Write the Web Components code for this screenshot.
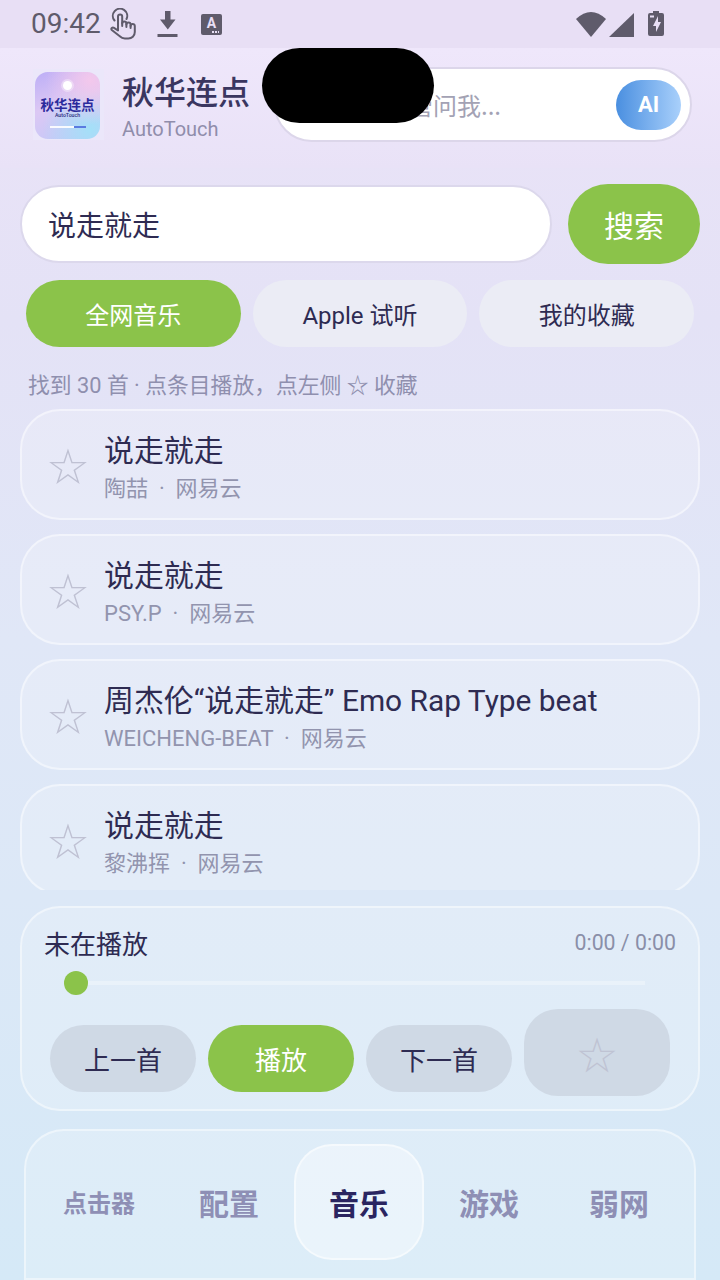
<!DOCTYPE html>
<html lang="zh">
<head>
<meta charset="utf-8">
<title>AutoTouch</title>
<style>
    html, body { margin: 0; padding: 0; }
    body {
        width: 720px;
        height: 1280px;
        overflow: hidden;
        font-family: Roboto, "Noto Sans CJK SC", sans-serif;
        color: #2e2b52;
        background: linear-gradient(180deg, #ece3f8 0%, #e4e2f6 25%, #e0e7f7 50%, #dce8f7 70%, #d5e9f7 100%);
    }
</style>
</head>
<body>
<app-shell>
    <status-bar></status-bar>
    <app-header></app-header>
    <search-bar value="说走就走"></search-bar>
    <source-tabs></source-tabs>
    <result-hint>找到 30 首 · 点条目播放，点左侧 ☆ 收藏</result-hint>
    <song-list>
        <song-row title-text="说走就走" sub="陶喆 &nbsp;·&nbsp; 网易云"></song-row>
        <song-row title-text="说走就走" sub="PSY.P &nbsp;·&nbsp; 网易云"></song-row>
        <song-row title-text="周杰伦“说走就走” Emo Rap Type beat" sub="WEICHENG-BEAT &nbsp;·&nbsp; 网易云"></song-row>
        <song-row title-text="说走就走" sub="黎沸挥 &nbsp;·&nbsp; 网易云"></song-row>
    </song-list>
    <player-card></player-card>
    <bottom-nav></bottom-nav>
</app-shell>

<script>
class AppShell extends HTMLElement {
    constructor () {
        super();
        this.attachShadow({mode: 'open'})
        this.shadowRoot.innerHTML = `
            <style>
                :host { display: flex; flex-direction: column; width: 720px; height: 1280px; position: relative; overflow: hidden; }
                .cutout { position: absolute; left: 262px; top: 48px; width: 172px; height: 75px; border-radius: 38px; background: #000; }
            </style>
            <slot></slot>
            <div class="cutout"></div>
        `
    }
}

class StatusBar extends HTMLElement {
    constructor () {
        super();
        this.attachShadow({mode: 'open'})
        this.shadowRoot.innerHTML = `
            <style>
                :host { display: flex; align-items: center; height: 48px; padding-left: 31px; background: #e8dff5; color: #5f5b6b; box-sizing: border-box; }
                .time { font: 400 28px/48px Roboto, sans-serif; width: 79px; }
                svg { display: block; flex: none; }
                .dl { margin-left: 20px; }
                .kbd { margin-left: 22px; width: 21px; height: 21px; border-radius: 2px; background: #5f5b6b; color: #e8dff5; position: relative; flex: none; display: flex; justify-content: center; margin-top: 1px; }
                .kbd b { font: 700 14px/19px Roboto, sans-serif; }
                .kbd i { position: absolute; right: 3px; bottom: 2px; width: 7px; height: 2px; background: repeating-linear-gradient(90deg, #e8dff5 0 2px, transparent 2px 3px); }
                .right { margin-left: auto; margin-right: 56px; display: flex; }
            </style>
            <div class="time">09:42</div>
            <svg class="hand" width="27" height="32" viewBox="0 0 27 32" fill="none" stroke="currentColor" stroke-width="2" stroke-linecap="round" stroke-linejoin="round">
                <path d="M4.5 12.5 A7.2 7.2 0 1 1 16.5 11"/>
                <path d="M8 22 V8.5 a2.1 2.1 0 0 1 4.2 0 V18"/>
                <path d="M12.2 15.5 a2.1 2.1 0 0 1 4.2 0 V19"/>
                <path d="M16.4 16.5 a2.1 2.1 0 0 1 4.2 0 V20"/>
                <path d="M20.6 18 a2.1 2.1 0 0 1 4.2 0 V24 c0 4 -3 6.5 -6.5 6.5 h-3.5 c-2.2 0 -3.6 -.8 -5 -2.2 L1.8 22 c-1.2 -1.4 .6 -3.2 2.2 -2.2 L8 22.5"/>
            </svg>
            <svg class="dl" width="22" height="27" viewBox="0 0 22 27" fill="currentColor">
                <path d="M8 0h5.5v8.5h5L10.800 18.500 3 8.500h5z"/>
                <rect x="0.500" y="23" width="20" height="3"/>
            </svg>
            <div class="kbd"><b>A</b><i></i></div>
            <svg class="right" width="88" height="26" viewBox="576 10 88 26" fill="currentColor">
                <path d="M576 18 Q591 4 606 18 L591 36 Z"/>
                <path d="M609 36 L634 12 V36 Z"/>
                <path d="M653 10h6v2h3a2 2 0 0 1 2 2v19a2 2 0 0 1 -2 2h-12a2 2 0 0 1 -2 -2v-19a2 2 0 0 1 2 -2h3z"/>
                <path fill="#e8dff5" d="M658 15l-5 10h3v6l5-10h-3z M650 14.500h4v2h-4z"/>
            </svg>
        `
    }
}

class AppHeader extends HTMLElement {
    constructor () {
        super();
        this.attachShadow({mode: 'open'})
        this.shadowRoot.innerHTML = `
            <style>
                :host { display: flex; align-items: flex-start; height: 120px; padding: 19px 28px 0 33px; box-sizing: border-box; background: linear-gradient(180deg, #efe7fb, #e9e2f7); font-family: Roboto, "Noto Sans CJK SC", sans-serif; }
                .tile { width: 71px; height: 71px; margin-top: 2px; padding: 3px 0 0 2px; box-sizing: border-box; flex: none; background: #ebe7fa; }
                .logo { width: 65px; height: 67px; border-radius: 13px; background: radial-gradient(circle at 85% 12%, #f3c8ec 0, rgba(243,200,236,0) 55%), radial-gradient(circle at 85% 85%, #a4e0f8 0, rgba(164,224,248,0) 60%), linear-gradient(160deg, #bcaef6 0%, #dcc8f4 45%, #c0c8f8 100%); display: flex; flex-direction: column; align-items: center; overflow: hidden; }
                .dot { width: 9px; height: 9px; margin-top: 9px; border-radius: 50%; background: #fff; box-shadow: 0 0 0 2px rgba(255,255,255,.35); flex: none; }
                .logo b { font: 700 13.500px/16px "Noto Sans CJK SC", sans-serif; color: #2b2a9c; margin-top: 6px; white-space: nowrap; flex: none; }
                .logo small { font: 500 5.200px/6px Roboto, sans-serif; color: #2b2a7c; flex: none; }
                .bar { width: 36px; height: 2px; margin-top: 8px; flex: none; background: linear-gradient(90deg, rgba(255,255,255,.9) 68%, #5a7be0 68%); }
                .names { margin-left: 18px; width: 128px; flex: none; }
                .name { font: 500 32px/46px "Noto Sans CJK SC", sans-serif; color: #3a3660; white-space: nowrap; }
                .en { font: 400 20px/26px Roboto, sans-serif; color: #908dab; margin-top: 3px; }
                .ask { margin-left: 24px; flex: 1; height: 75px; box-sizing: border-box; border: 2px solid #dcd6ea; border-radius: 38px; background: #fff; display: flex; align-items: center; justify-content: space-between; padding: 0 9px 0 109px; }
                .ask span { font: 400 24px/32px "Noto Sans CJK SC", sans-serif; color: #a3a2b4; }
                .ai { width: 65px; height: 50px; border-radius: 25px; background: linear-gradient(90deg, #4a8fe0, #a9d0fb); color: #fff; font: 700 22px/50px Roboto, sans-serif; text-align: center; }
            </style>
            <div class="tile"><div class="logo"><div class="dot"></div><b>秋华连点</b><small>AutoTouch</small><div class="bar"></div></div></div>
            <div class="names"><div class="name">秋华连点</div><div class="en">AutoTouch</div></div>
            <div class="ask"><span>尽管问我...</span><div class="ai">AI</div></div>
        `
    }
}

class SearchBar extends HTMLElement {
    constructor () {
        super();
        this.attachShadow({mode: 'open'})
        this.shadowRoot.innerHTML = `
            <style>
                :host { display: flex; gap: 16px; padding: 16px 20px 0; align-items: center; }
                .input { flex: 1; height: 78px; box-sizing: border-box; border: 2px solid #dcd8ec; border-radius: 39px; background: #fff; padding-left: 26px; font: 400 28px/74px "Noto Sans CJK SC", sans-serif; color: #2e2b52; }
                .go { width: 132px; height: 80px; border-radius: 40px; background: #8bc34a; color: #fff; font: 400 30px/80px "Noto Sans CJK SC", sans-serif; text-align: center; flex: none; }
            </style>
            <div class="input">${this.getAttribute("value")}</div>
            <div class="go">搜索</div>
        `
    }
}

class SourceTabs extends HTMLElement {
    constructor () {
        super();
        this.attachShadow({mode: 'open'})
        this.shadowRoot.innerHTML = `
            <style>
                :host { display: grid; grid-template-columns: repeat(3, 1fr); gap: 12px; padding: 16px 26px 0; }
                div { height: 67px; border-radius: 34px; background: #ebecf5; color: #2e2b52; font: 400 24px/72px Roboto, "Noto Sans CJK SC", sans-serif; text-align: center; white-space: nowrap; }
                .on { background: #8bc34a; color: #fff; }
            </style>
            <div class="on">全网音乐</div><div>Apple 试听</div><div>我的收藏</div>
        `
    }
}

class ResultHint extends HTMLElement {
    constructor () {
        super();
        this.attachShadow({mode: 'open'})
        this.shadowRoot.innerHTML = `
            <style>
                :host { display: block; height: 62px; padding: 24px 0 0 28px; box-sizing: border-box; font: 400 21.800px/30px Roboto, "Noto Sans CJK SC", sans-serif; color: #8f8fae; white-space: nowrap; }
            </style>
            <slot></slot>
        `
    }
}

class SongList extends HTMLElement {
    constructor () {
        super();
        this.attachShadow({mode: 'open'})
        this.shadowRoot.innerHTML = `
            <style>
                :host { display: flex; flex-direction: column; gap: 14px; height: 481px; overflow: hidden; padding: 0 20px; flex: none; }
            </style>
            <slot></slot>
        `
    }
}

class SongRow extends HTMLElement {
    constructor () {
        super();
        this.attachShadow({mode: 'open'})
        this.shadowRoot.innerHTML = `
            <style>
                :host { display: flex; align-items: center; flex: none; height: 111px; box-sizing: border-box; border: 2px solid rgba(255,255,255,.45); border-radius: 40px; background: rgba(255,255,255,.2); padding-left: 24px; }
                .star { width: 38px; flex: none; margin-top: 7px; font: 400 49px/50px "DejaVu Sans", sans-serif; color: #bfc1d3; text-align: center; }
                .text { margin-left: 20px; min-width: 0; margin-top: 7px; }
                .t { font: 400 29.900px/38px Roboto, "Noto Sans CJK SC", sans-serif; color: #2e2b52; white-space: nowrap; }
                .s { font: 400 22px/30px Roboto, "Noto Sans CJK SC", sans-serif; color: #9294ae; white-space: nowrap; margin-top: 4px; }
            </style>
            <div class="star">☆</div>
            <div class="text">
                <div class="t">${this.getAttribute("title-text")}</div>
                <div class="s">${this.getAttribute("sub")}</div>
            </div>
        `
    }
}

class PlayerCard extends HTMLElement {
    constructor () {
        super();
        this.attachShadow({mode: 'open'})
        this.shadowRoot.innerHTML = `
            <style>
                :host { display: block; flex: none; height: 205px; margin: 16px 20px 0; box-sizing: border-box; border: 2px solid rgba(255,255,255,.45); border-radius: 40px; background: rgba(255,255,255,.18); padding: 15px 22px 0; }
                .top { display: flex; justify-content: space-between; align-items: center; height: 40px; }
                .now { font: 400 26px/40px "Noto Sans CJK SC", sans-serif; color: #2e2b52; }
                .time { font: 400 21.300px/40px Roboto, sans-serif; color: #8a8fa8; }
                .slider { height: 24px; margin: 8px 31px 0 20px; display: flex; align-items: center; }
                .thumb { width: 24px; height: 24px; border-radius: 50%; background: #8bc34a; flex: none; }
                .track { flex: 1; height: 4px; background: rgba(255,255,255,.3); }
                .btns { display: flex; gap: 12px; align-items: flex-start; margin: 14px 0 0 6px; }
                .btn { width: 146px; height: 67px; margin-top: 16px; border-radius: 34px; background: #cfd9e5; font: 400 26px/68px "Noto Sans CJK SC", sans-serif; color: #2e2b52; text-align: center; flex: none; }
                .play { background: #8bc34a; color: #fff; }
                .fav { height: 87px; margin-top: 0; border-radius: 34px; font: 400 48px/92px "DejaVu Sans", sans-serif; color: #bfc3d3; }
            </style>
            <div class="top"><div class="now">未在播放</div><div class="time">0:00 / 0:00</div></div>
            <div class="slider"><div class="thumb"></div><div class="track"></div></div>
            <div class="btns">
                <div class="btn">上一首</div>
                <div class="btn play">播放</div>
                <div class="btn">下一首</div>
                <div class="btn fav">☆</div>
            </div>
        `
    }
}

class BottomNav extends HTMLElement {
    constructor () {
        super();
        this.attachShadow({mode: 'open'})
        this.shadowRoot.innerHTML = `
            <style>
                :host { display: grid; grid-template-columns: repeat(5, 130px); flex: none; height: 151px; margin: 18px 24px 0; box-sizing: border-box; border: 2px solid rgba(255,255,255,.45); border-radius: 40px 40px 0 0; background: rgba(255,255,255,.18); padding: 13px 8px 18px; }
                div { height: 116px; box-sizing: border-box; text-align: center; font: 700 30px/116px "Noto Sans CJK SC", sans-serif; color: #8e8fb5; }
                .small { font-size: 24px; }
                .on { color: #2a2560; background: rgba(255,255,255,.4); border: 2px solid rgba(255,255,255,.5); border-radius: 38px; line-height: 112px; }
            </style>
            <div class="small">点击器</div><div>配置</div><div class="on">音乐</div><div>游戏</div><div>弱网</div>
        `
    }
}

customElements.define('app-shell', AppShell)
customElements.define('status-bar', StatusBar)
customElements.define('app-header', AppHeader)
customElements.define('search-bar', SearchBar)
customElements.define('source-tabs', SourceTabs)
customElements.define('result-hint', ResultHint)
customElements.define('song-list', SongList)
customElements.define('song-row', SongRow)
customElements.define('player-card', PlayerCard)
customElements.define('bottom-nav', BottomNav)
</script>
</body>
</html>
